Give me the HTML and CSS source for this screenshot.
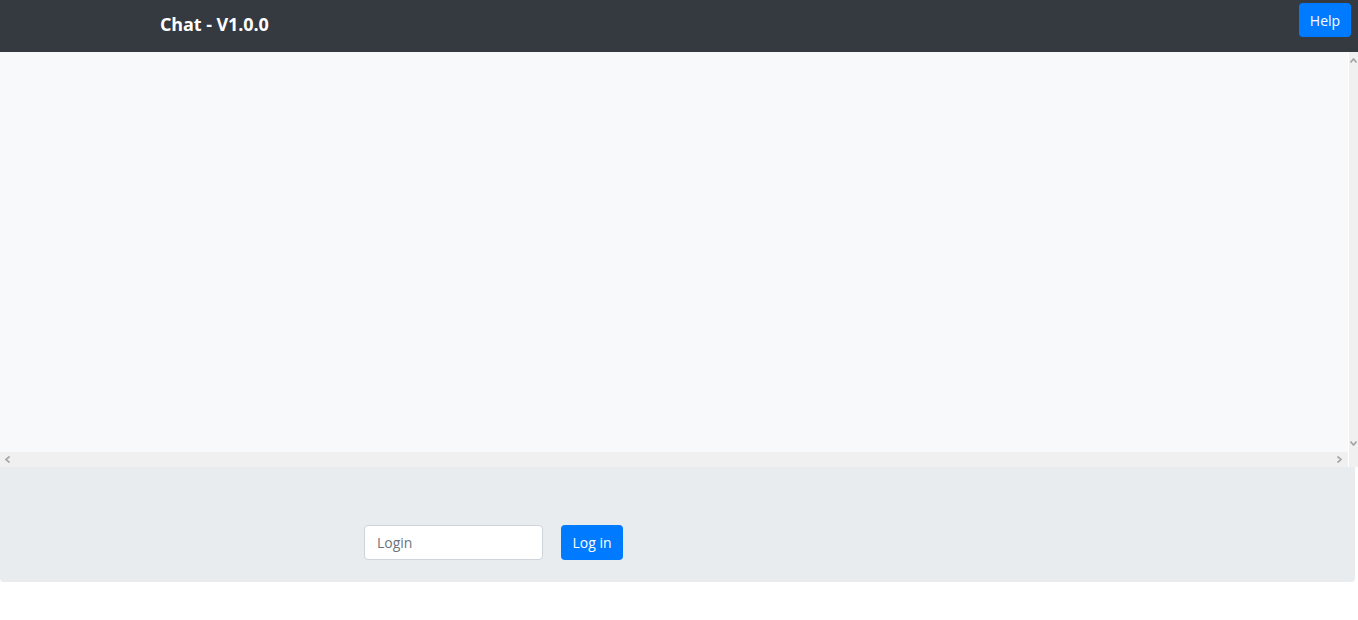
FILE: index.html
```html
<!DOCTYPE html>
<html lang="en">
<head>
    <meta charset="UTF-8">
    <meta name="viewport" content="width=device-width, initial-scale=1.0">
    <title>Chat - V1.0.0</title>
    <link rel="stylesheet" href="styles.css">
</head>
<body>
    <div class="navbar">
        <span class="brand">Chat - V1.0.0</span>
        <button class="btn help-btn">Help</button>
    </div>

    <!-- messages, with its scrollbars -->
    <div class="messages">
        <div class="messages-row">
            <div class="messages-list"></div>
            <div class="vbar">
                <svg width="7" height="5" viewBox="0 0 7 5"><polyline points="0.5,4.5 3.5,1 6.5,4.5" fill="none" stroke="#a3a3a3" stroke-width="1.6"/></svg>
                <svg width="7" height="5" viewBox="0 0 7 5"><polyline points="0.5,0.5 3.5,4 6.5,0.5" fill="none" stroke="#a3a3a3" stroke-width="1.6"/></svg>
            </div>
        </div>
        <div class="hbar-row">
            <div class="hbar">
                <svg width="5" height="7" viewBox="0 0 5 7"><polyline points="4.5,0.5 1,3.5 4.5,6.5" fill="none" stroke="#a3a3a3" stroke-width="1.6"/></svg>
                <svg width="5" height="7" viewBox="0 0 5 7"><polyline points="0.5,0.5 4,3.5 0.5,6.5" fill="none" stroke="#a3a3a3" stroke-width="1.6"/></svg>
            </div>
            <div class="corner"></div>
        </div>
    </div>

    <!-- login -->
    <div class="footer">
        <input type="text" class="form-control" placeholder="Login">
        <button class="btn login-btn">Log in</button>
    </div>
</body>
</html>
```

FILE: styles.css
```css
* {
    margin: 0;
    padding: 0;
    box-sizing: border-box;
    font-family: 'Open Sans', 'Noto Sans', 'Liberation Sans', sans-serif;
}

body {
    background: white;
    width: 1358px;
}

.navbar {
    height: 52px;
    background: #343a40;
    display: flex;
    align-items: flex-start;
    justify-content: space-between;
}

.brand {
    color: white;
    font-size: 18px;
    font-weight: 700;
    margin-left: 160px;
    margin-top: 12px;
    line-height: 24px;
    letter-spacing: -0.1px;
}

.btn {
    background: #007bff;
    color: white;
    border: none;
    border-radius: 4px;
    font-size: 14px;
    cursor: pointer;
}

.help-btn {
    width: 52px;
    height: 34px;
    margin-top: 3px;
    margin-right: 7px;
}

/* 消息区 + 滚动条 */
.messages {
    height: 415px;
    display: flex;
    flex-direction: column;
}

.messages-row {
    height: 400px;
    display: flex;
    gap: 1px;
    background: white;
}

.messages-list {
    flex: 1;
    background: #f8f9fa;
}

.vbar {
    width: 9px;
    background: #f0f0f0;
    display: flex;
    flex-direction: column;
    justify-content: space-between;
    align-items: center;
    padding: 6px 0 6px;
}

.hbar-row {
    height: 15px;
    display: flex;
    gap: 1px;
    background: white;
}

.hbar {
    flex: 1;
    background: #f0f0f0;
    display: flex;
    justify-content: space-between;
    align-items: center;
    padding: 0 6px 0 5px;
}

.corner {
    width: 9px;
    background: #f0f0f0;
}

.footer {
    height: 115px;
    width: 1355px;
    background: #e9ecef;
    border-radius: 0 0 4px 4px;
    display: flex;
    align-items: center;
    padding-left: 364px;
    padding-top: 36px;
    gap: 18px;
}

.form-control {
    width: 179px;
    height: 35px;
    border: 1px solid #ced4da;
    border-radius: 4px;
    padding: 0 12px;
    font-size: 14px;
    color: #495057;
    background: white;
}

.form-control::placeholder {
    color: #6c757d;
}

.login-btn {
    width: 62px;
    height: 35px;
}
```
